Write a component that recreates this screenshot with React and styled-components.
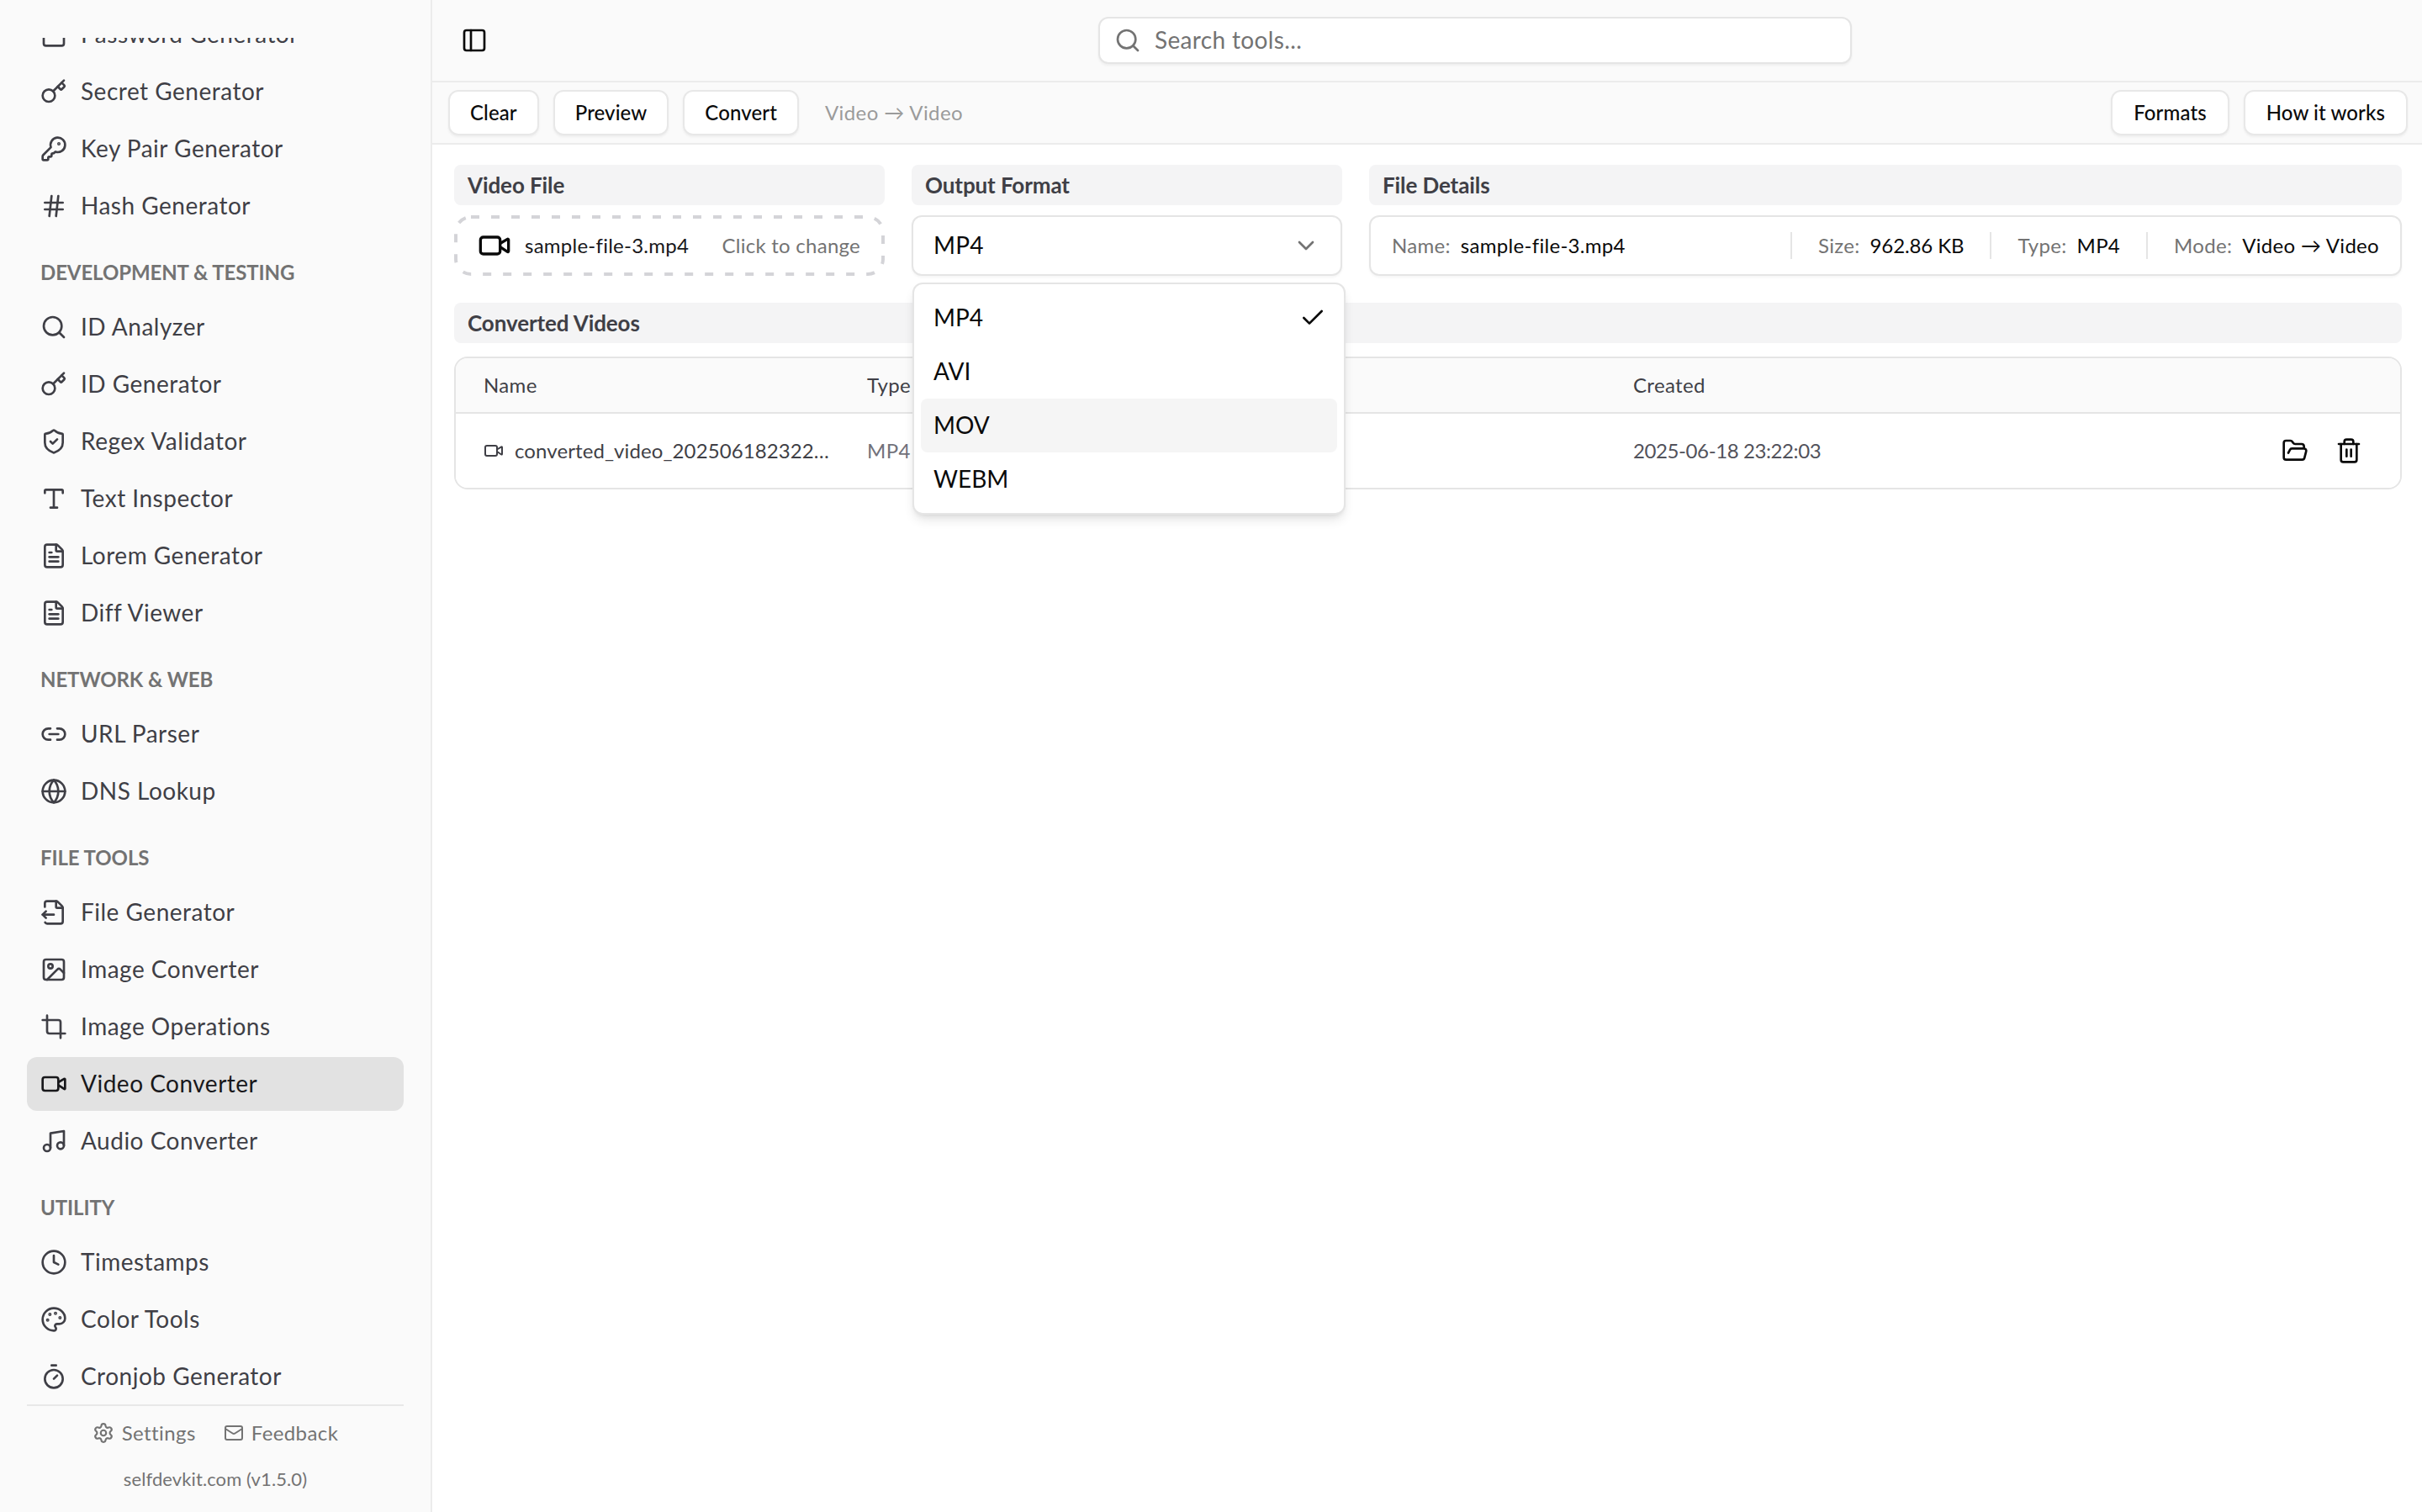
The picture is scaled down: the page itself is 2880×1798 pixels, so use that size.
import React from 'react'
import styled, { createGlobalStyle } from 'styled-components'
import {
  Check, ChevronDown, Clock, Crop, FileOutput, FileText, FolderOpen, Globe, Hash,
  Image as ImageIcon, Key, KeyRound, Link2, Lock, Mail, Music, Palette, PanelLeft,
  Search, Settings, ShieldCheck, Timer, Trash2, Type, Video,
} from 'lucide-react'

const GlobalStyle = createGlobalStyle`
  html, body {
    margin: 0;
    background: #fff;
    font-family: Lato, "Open Sans", sans-serif;
    color: #0a0a0a;
  }
  * { box-sizing: border-box; }
`

const Shell = styled.div`
  display: flex;
  width: 100vw;
  height: 100vh;
  overflow: hidden;
`

const Sidebar = styled.aside`
  display: flex;
  flex-direction: column;
  flex: 0 0 514px;
  background: #fafafa;
  border-right: 2px solid #ececec;
`

const SidebarScroll = styled.div`
  flex: 1;
  min-height: 0;
  margin-top: 45px;
  overflow: hidden;
`

const SidebarList = styled.div`
  margin-top: -36px;
  padding: 0 32px;
`

const GroupLabel = styled.div`
  display: flex;
  align-items: center;
  height: 48px;
  margin: 23px 0 9px;
  padding: 0 0 1px 16px;
  font-size: 24px;
  font-weight: 700;
  letter-spacing: -0.1px;
  color: #737373;
`

const NavList = styled.div`
  display: flex;
  flex-direction: column;
  gap: 4px;
`

const NavRow = styled.div`
  display: flex;
  align-items: center;
  gap: 16px;
  height: 64px;
  padding: 0 16px;
  border-radius: 12px;
  font-size: 28px;
  letter-spacing: 0.5px;
  background: ${(p) => (p.$active ? '#e2e2e2' : 'transparent')};
  color: ${(p) => (p.$active ? '#18181b' : '#3f3f46')};
  svg { flex: none; }
`

// lifts text a touch so it sits on the same line as the icons beside it
const Raised = styled.span`
  margin-bottom: 2px;
`

const SidebarFooter = styled.div`
  flex: 0 0 128px;
  margin: 0 32px;
  border-top: 2px solid #e8e8e8;
  font-size: 24px;
  color: #737373;
`

const FooterLinks = styled.div`
  display: flex;
  justify-content: center;
  gap: 33px;
  margin-top: 18px;
  height: 28px;
`

const FooterLink = styled.span`
  display: flex;
  align-items: center;
  gap: 9px;
  letter-spacing: 0.4px;
`

const Version = styled.div`
  margin-top: 27px;
  text-align: center;
  font-size: 22px;
  letter-spacing: 0.1px;
`

const Main = styled.main`
  flex: 1;
  min-width: 0;
  display: flex;
  flex-direction: column;
`

const TopBar = styled.header`
  display: flex;
  align-items: center;
  flex: 0 0 98px;
  background: #fafafa;
  border-bottom: 2px solid #ececec;
`

const IconButton = styled.button`
  display: flex;
  align-items: center;
  justify-content: center;
  width: 64px;
  height: 64px;
  margin-left: 18px;
  padding: 0;
  border: 0;
  background: none;
  color: #0a0a0a;
`

const SearchBox = styled.div`
  display: flex;
  align-items: center;
  gap: 16px;
  width: 896px;
  height: 56px;
  margin-left: 710px;
  padding: 0 17px;
  background: #fff;
  border: 2px solid #e5e5e5;
  border-radius: 12px;
  box-shadow: 0 2px 3px rgba(0, 0, 0, 0.05);
  font-size: 28px;
  letter-spacing: 0.35px;
  color: #737373;
`

const ToolBar = styled.div`
  display: flex;
  align-items: center;
  gap: 17px;
  flex: 0 0 74px;
  padding: 0 17px 0 19px;
  background: #fafafa;
  border-bottom: 2px solid #ececec;
`

const ToolButton = styled.button`
  height: 54px;
  padding: 0 ${(p) => (p.$wide ? '25px' : '24px')} 2px;
  background: #fff;
  border: 2px solid #e8e8e8;
  border-radius: 12px;
  box-shadow: 0 2px 3px rgba(0, 0, 0, 0.05);
  font: inherit;
  font-size: 24px;
  font-weight: 500;
  letter-spacing: 0.1px;
  color: #0a0a0a;
`

const ModeHint = styled.span`
  margin: 0 0 2px 14px;
  font-size: 24px;
  letter-spacing: 0.4px;
  color: #9b9b9b;
`

const Spacer = styled.div`
  flex: 1;
`

const Content = styled.div`
  flex: 1;
  padding: 24px 24px 0 26px;
  display: flex;
  flex-direction: column;
  gap: 32px;
`

const TopGrid = styled.div`
  display: grid;
  grid-template-columns: 512px 512px 1fr;
  column-gap: 32px;
`

const Field = styled.div`
  display: flex;
  flex-direction: column;
  gap: 12px;
  position: relative;
`

const SectionHead = styled.div`
  display: flex;
  align-items: center;
  height: 48px;
  padding: 0 0 1px 16px;
  background: #f4f4f5;
  border-radius: 8px;
  font-size: 26px;
  font-weight: 700;
  letter-spacing: -0.1px;
  color: #3f3f46;
`

const DropZone = styled.div`
  position: relative;
  display: flex;
  align-items: center;
  height: 72px;
  padding: 0 29px 0 28px;
  font-size: 24px;
  letter-spacing: 0.25px;
`

const DashedFrame = styled.svg`
  position: absolute;
  inset: 0;
  width: 512px;
  height: 72px;
  fill: none;
  stroke: #d4d4d8;
  stroke-width: 4;
  stroke-dasharray: 10 14;
`

const FileName = styled(Raised)`
  margin-left: 16px;
  color: #18181b;
`

const ClickHint = styled(Raised)`
  margin-left: auto;
  color: #737373;
`

const SelectBox = styled.div`
  display: flex;
  align-items: center;
  justify-content: space-between;
  height: 72px;
  padding: 0 25px 0 24px;
  background: #fff;
  border: 2px solid #e5e5e5;
  border-radius: 12px;
  box-shadow: 0 2px 3px rgba(0, 0, 0, 0.04);
  font-size: 28px;
  letter-spacing: 0.2px;
  color: #0a0a0a;
  svg { color: #737373; }
`

const Menu = styled.div`
  position: absolute;
  top: 140px;
  left: 1px;
  z-index: 5;
  width: 515px;
  padding: 8px;
  background: #fff;
  border: 2px solid #e5e5e5;
  border-radius: 12px;
  box-shadow: 0 8px 14px -3px rgba(0, 0, 0, 0.12), 0 3px 6px -3px rgba(0, 0, 0, 0.1);
`

const MenuItem = styled.div`
  display: flex;
  align-items: center;
  justify-content: space-between;
  height: 64px;
  padding: 0 13px 0 15px;
  border-radius: 8px;
  font-size: 28px;
  letter-spacing: 0;
  color: #0a0a0a;
  background: ${(p) => (p.$hover ? '#f5f5f5' : 'transparent')};
`

const DetailsBox = styled.div`
  display: flex;
  align-items: center;
  height: 72px;
  padding: 0 25px;
  background: #fff;
  border: 2px solid #e5e5e5;
  border-radius: 12px;
  box-shadow: 0 2px 3px rgba(0, 0, 0, 0.04);
  font-size: 24px;
  letter-spacing: 0.3px;
`

const Detail = styled.div`
  display: flex;
  align-items: center;
  gap: 12px;
  height: 32px;
  ${(p) => (p.$grow
    ? 'flex: 1;'
    : 'padding-left: 31px; margin-left: 31px; border-left: 2px solid #e5e5e5;')}
`

const DetailKey = styled(Raised)`
  color: #737373;
`

const DetailValue = styled(Raised)`
  color: #0a0a0a;
  letter-spacing: ${(p) => (p.$tight ? '-0.1px' : 'inherit')};
`

const TableSection = styled.section`
  display: flex;
  flex-direction: column;
  gap: 16px;
`

const Table = styled.div`
  border: 2px solid #e5e5e5;
  border-radius: 16px;
  overflow: hidden;
  font-size: 24px;
  letter-spacing: 0.35px;
`

const TableRow = styled.div`
  display: grid;
  grid-template-columns: 456px 911px 1fr auto;
  align-items: center;
  padding: 0 33px;
  height: ${(p) => (p.$head ? '66px' : '88px')};
  background: ${(p) => (p.$head ? '#fafafa' : '#fff')};
  border-bottom: ${(p) => (p.$head ? '2px solid #e5e5e5' : '0')};
  color: ${(p) => (p.$head ? '#3f3f46' : '#52525b')};
`

const NameCell = styled.div`
  display: flex;
  align-items: center;
  gap: 13px;
  min-width: 0;
  color: #3f3f46;
  svg { flex: none; }
`

const Truncate = styled(Raised)`
  width: 374px;
  overflow: hidden;
  white-space: nowrap;
  text-overflow: ellipsis;
  letter-spacing: 0.1px;
`

const Muted = styled(Raised)`
  color: #71717a;
`

const DateText = styled(Raised)`
  letter-spacing: -0.4px;
`

const Actions = styled.div`
  display: flex;
  gap: 32px;
  margin-right: 12px;
  color: #0a0a0a;
`

const navGroups = [
  { items: [
    { label: 'Password Generator', icon: Lock },
    { label: 'Secret Generator', icon: Key },
    { label: 'Key Pair Generator', icon: KeyRound },
    { label: 'Hash Generator', icon: Hash },
  ] },
  { title: 'DEVELOPMENT & TESTING', items: [
    { label: 'ID Analyzer', icon: Search },
    { label: 'ID Generator', icon: Key },
    { label: 'Regex Validator', icon: ShieldCheck },
    { label: 'Text Inspector', icon: Type },
    { label: 'Lorem Generator', icon: FileText },
    { label: 'Diff Viewer', icon: FileText },
  ] },
  { title: 'NETWORK & WEB', items: [
    { label: 'URL Parser', icon: Link2 },
    { label: 'DNS Lookup', icon: Globe },
  ] },
  { title: 'FILE TOOLS', items: [
    { label: 'File Generator', icon: FileOutput },
    { label: 'Image Converter', icon: ImageIcon },
    { label: 'Image Operations', icon: Crop },
    { label: 'Video Converter', icon: Video, active: true },
    { label: 'Audio Converter', icon: Music },
  ] },
  { title: 'UTILITY', items: [
    { label: 'Timestamps', icon: Clock },
    { label: 'Color Tools', icon: Palette },
    { label: 'Cronjob Generator', icon: Timer },
  ] },
]

const formats = ['MP4', 'AVI', 'MOV', 'WEBM']

const details = [
  { key: 'Name:', value: 'sample-file-3.mp4', grow: true },
  { key: 'Size:', value: '962.86 KB', tight: true },
  { key: 'Type:', value: 'MP4' },
  { key: 'Mode:', value: 'Video → Video' },
]

function SideNav() {
  return (
    <Sidebar>
      <SidebarScroll>
        <SidebarList>
          {navGroups.map((group, i) => (
            <div key={i}>
              {group.title && <GroupLabel>{group.title}</GroupLabel>}
              <NavList>
                {group.items.map(({ label, icon: Icon, active }) => (
                  <NavRow key={label} $active={active}>
                    <Icon size={32} strokeWidth={2} />
                    <Raised>{label}</Raised>
                  </NavRow>
                ))}
              </NavList>
            </div>
          ))}
        </SidebarList>
      </SidebarScroll>
      <SidebarFooter>
        <FooterLinks>
          <FooterLink><Settings size={26} /><Raised>Settings</Raised></FooterLink>
          <FooterLink><Mail size={24} /><Raised>Feedback</Raised></FooterLink>
        </FooterLinks>
        <Version>selfdevkit.com (v1.5.0)</Version>
      </SidebarFooter>
    </Sidebar>
  )
}

export default function App() {
  return (
    <Shell>
      <GlobalStyle />
      <SideNav />
      <Main>
        <TopBar>
          <IconButton><PanelLeft size={32} /></IconButton>
          <SearchBox>
            <Search size={32} />
            <Raised>Search tools...</Raised>
          </SearchBox>
        </TopBar>
        <ToolBar>
          <ToolButton>Clear</ToolButton>
          <ToolButton>Preview</ToolButton>
          <ToolButton>Convert</ToolButton>
          <ModeHint>Video → Video</ModeHint>
          <Spacer />
          <ToolButton $wide>Formats</ToolButton>
          <ToolButton $wide>How it works</ToolButton>
        </ToolBar>
        <Content>
          <TopGrid>
            <Field>
              <SectionHead>Video File</SectionHead>
              <DropZone>
                <DashedFrame viewBox="0 0 512 72"><rect x="2" y="2" width="508" height="68" rx="18" /></DashedFrame>
                <Video size={40} />
                <FileName>sample-file-3.mp4</FileName>
                <ClickHint>Click to change</ClickHint>
              </DropZone>
            </Field>
            <Field>
              <SectionHead>Output Format</SectionHead>
              <SelectBox>
                <Raised>MP4</Raised>
                <ChevronDown size={32} />
              </SelectBox>
              <Menu>
                {formats.map((f) => (
                  <MenuItem key={f} $hover={f === 'MOV'}>
                    <Raised>{f}</Raised>
                    {f === 'MP4' && <Check size={32} />}
                  </MenuItem>
                ))}
              </Menu>
            </Field>
            <Field>
              <SectionHead>File Details</SectionHead>
              <DetailsBox>
                {details.map((d) => (
                  <Detail key={d.key} $grow={d.grow}>
                    <DetailKey>{d.key}</DetailKey>
                    <DetailValue $tight={d.tight}>{d.value}</DetailValue>
                  </Detail>
                ))}
              </DetailsBox>
            </Field>
          </TopGrid>
          <TableSection>
            <SectionHead>Converted Videos</SectionHead>
            <Table>
              <TableRow $head>
                <Raised>Name</Raised>
                <Raised>Type</Raised>
                <Raised>Created</Raised>
                <span />
              </TableRow>
              <TableRow>
                <NameCell>
                  <Video size={24} />
                  <Truncate>converted_video_20250618232203.mp4</Truncate>
                </NameCell>
                <Muted>MP4</Muted>
                <DateText>2025-06-18 23:22:03</DateText>
                <Actions>
                  <FolderOpen size={32} />
                  <Trash2 size={32} />
                </Actions>
              </TableRow>
            </Table>
          </TableSection>
        </Content>
      </Main>
    </Shell>
  )
}
